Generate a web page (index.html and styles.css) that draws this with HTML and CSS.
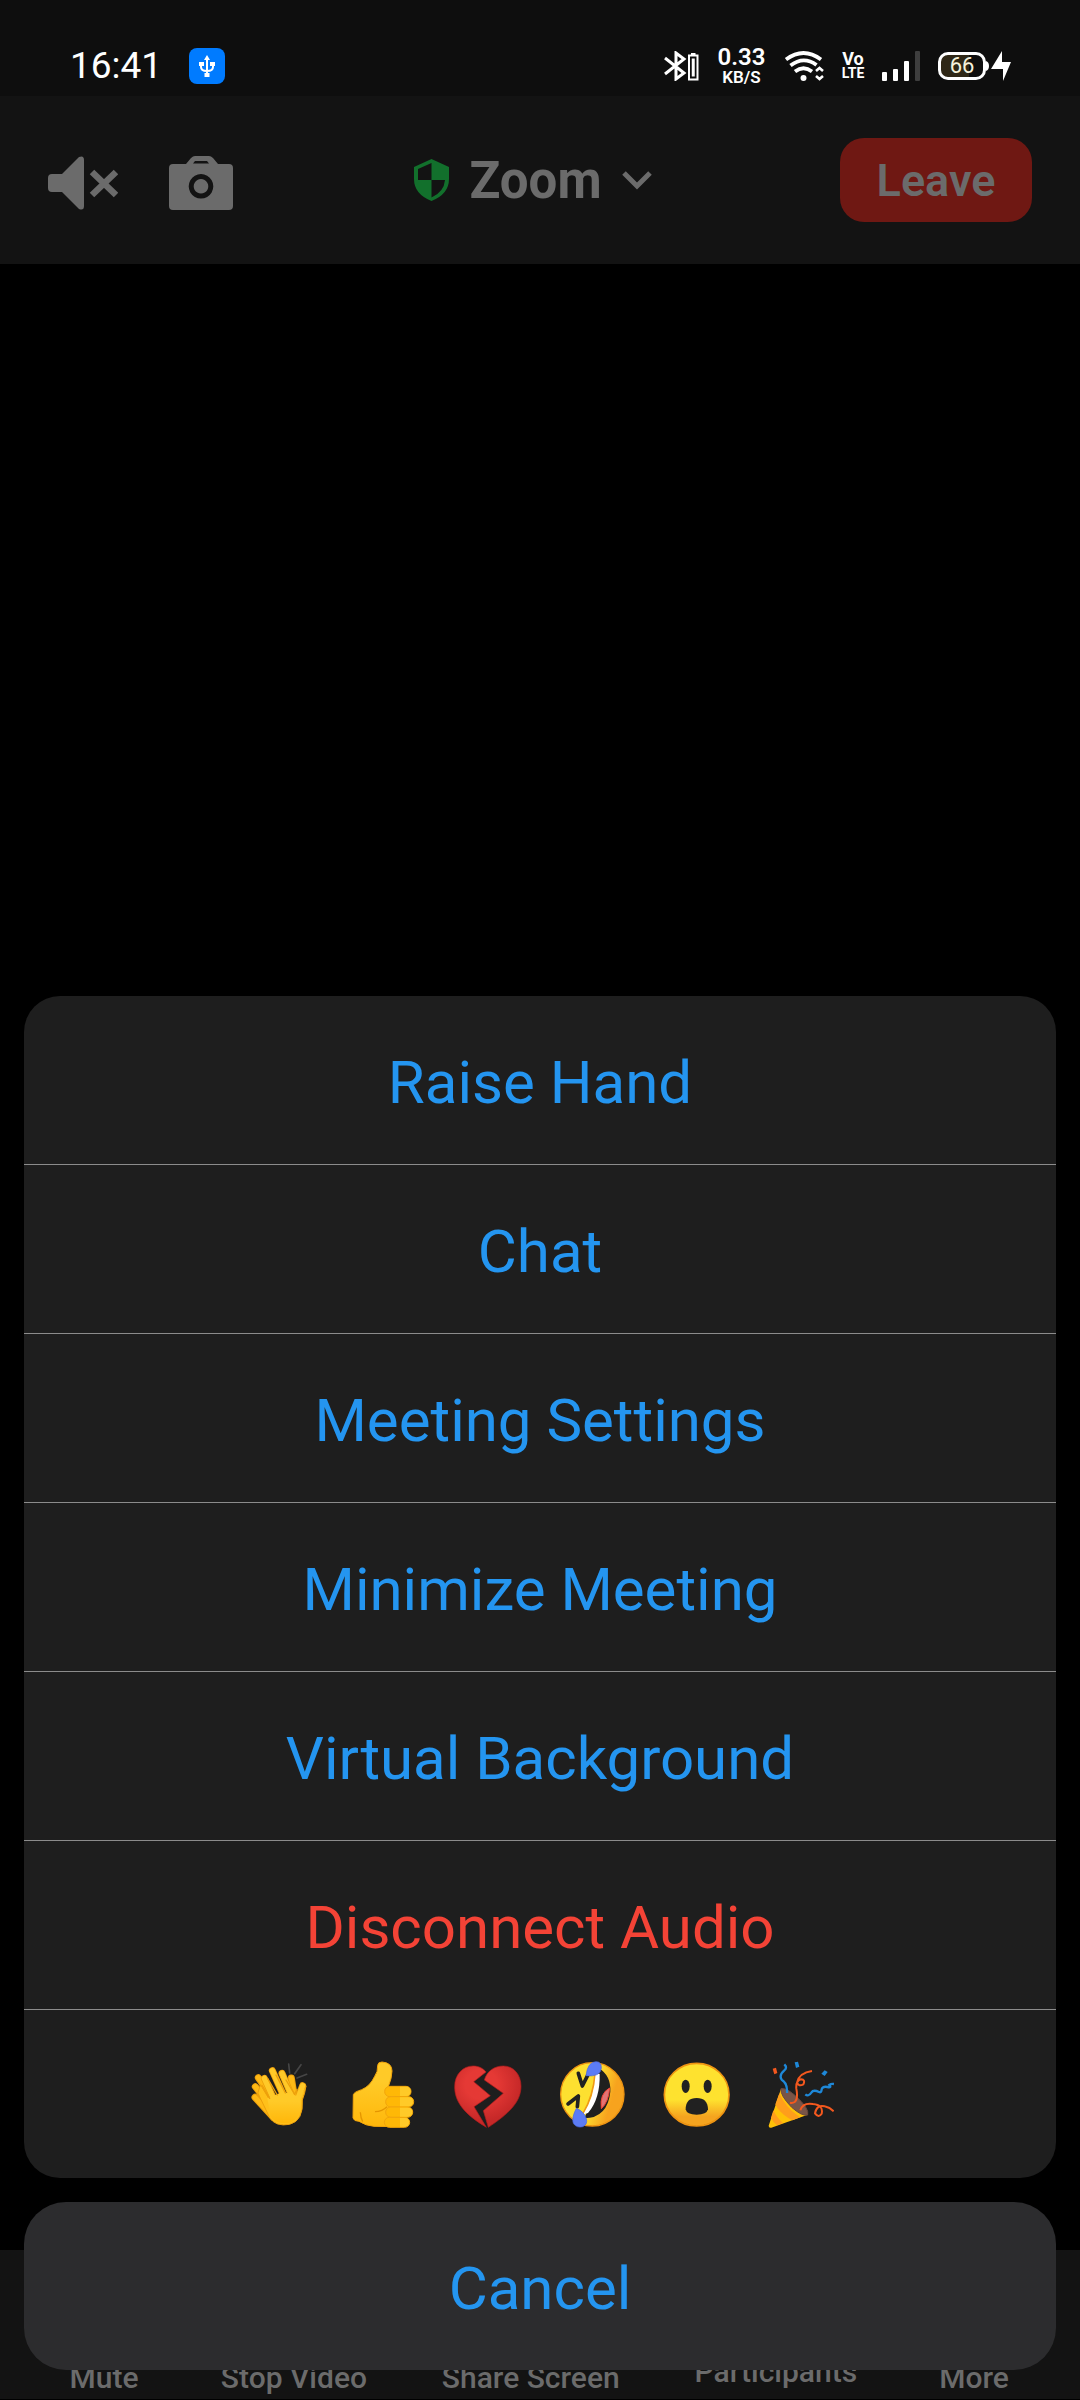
FILE: index.html
```html
<!DOCTYPE html>
<html lang="en">
<head>
<meta charset="utf-8">
<meta name="viewport" content="width=device-width, initial-scale=1">
<title>Zoom</title>
<link rel="stylesheet" href="styles.css">
</head>
<body>
<div class="screen">
  <div class="status">
    <div class="status-left">
      <span class="time">16:41</span>
      <svg class="usb" width="36" height="36" viewBox="0 0 36 36" aria-hidden="true">
        <rect width="36" height="36" rx="8" fill="#007bff"/>
        <path d="M18 12v16M12 17v2q0 4 6 4t6-4v-2" fill="none" stroke="#fff" stroke-width="2"/>
        <path d="M18 7l3 5h-6zM10 14h5v4h-5zM21 14h5v4h-5zM15.500 25h5v4h-5z" fill="#fff"/>
      </svg>
    </div>
    <div class="status-right">
      <svg width="35" height="30" viewBox="0 0 35 30" fill="none" stroke="#fff" aria-hidden="true">
        <path d="M1 7l19 15-8 6V2l8 6L1 23" stroke-width="3"/>
        <path d="M25 4.500h8.500v24H25zM27 3h4.500" stroke-width="2"/>
        <path d="M29.250 7.500v18" stroke-width="3"/>
      </svg>
      <div class="speed"><span class="speed-value">0.33</span><span class="speed-unit">KB/S</span></div>
      <svg width="40" height="30" viewBox="0 0 40 30" aria-hidden="true">
        <g fill="none" stroke="#fff" stroke-width="3.800">
          <path d="M2 8.500Q19.500-4.500 37 8.500"/>
          <path d="M6.500 14.500Q19.500 4.500 32.500 14"/>
          <path d="M11 20.500Q19.500 14 28 20.500"/>
          <path d="M32 20l3.500-3 3.500 3M32 25l3.500 3 3.500-3" stroke-width="2.600"/>
        </g>
        <circle cx="19.500" cy="27" r="3"/>
      </svg>
      <div class="volte"><span class="volte-vo">Vo</span><span class="volte-lte">LTE</span></div>
      <svg width="38" height="30" viewBox="0 0 38 30" aria-hidden="true">
        <rect y="21" width="5" height="9" rx="1"/><rect x="11" y="18" width="5" height="12" rx="1"/>
        <rect x="22" y="10" width="5" height="20" rx="1"/><rect x="33" width="5" height="30" rx="1" fill="#3e3e3e"/>
      </svg>
      <div class="power">
        <span class="battery">66</span>
        <svg width="25" height="30" viewBox="0 0 25 30" aria-hidden="true">
          <path d="M0 10q3 1 3 5t-3 5zM16 0v11h9L17 30V18H5z"/>
        </svg>
      </div>
    </div>
  </div>

  <header class="header">
    <div class="tools">
      <button class="icon-button" aria-label="Speaker">
        <svg width="70" height="54" viewBox="0 0 70 54">
          <path d="M4 18h10L31 1q5-2 5 3v46q0 5-5 3L14 36H4q-4 0-4-4V22q0-4 4-4z"/>
          <path d="M44 16l24 23M68 16L44 39" fill="none" stroke="#6b6b6b" stroke-width="6.500"/>
        </svg>
      </button>
      <button class="icon-button" aria-label="Switch camera">
        <svg width="64" height="54" viewBox="0 0 64 54">
          <path fill-rule="evenodd" d="M4 8h13l5-6q2-2 4-2h14q2 0 4 2l5 6h11q4 0 4 4v38q0 4-4 4H4q-4 0-4-4V12q0-4 4-4zM24 7.500h16L38 5H26zM32 18a12.300 12.300 0 1 0 .010 0zM32 23a7.300 7.300 0 1 1-.010 0z"/>
        </svg>
      </button>
    </div>
    <button class="title">
      <svg width="35" height="42" viewBox="0 0 35 42" aria-hidden="true">
        <path fill="#12702c" fill-rule="evenodd" d="M17.500 0L35 8v12q0 15-17.500 22Q0 35 0 20V8zM17.500 4L4 10v11h13.500zM17.500 21v17.500Q30 33 31 21z"/>
      </svg>
      <span>Zoom</span>
      <svg class="chevron" width="44" height="20" viewBox="0 0 44 20" aria-hidden="true">
        <path d="M2 3l13 13L28 3" fill="none" stroke="#6b6b6b" stroke-width="5"/>
      </svg>
    </button>
    <button class="leave">Leave</button>
  </header>

  <main class="stage"></main>

  <nav class="tabs">
    <span class="tab">Mute</span>
    <span class="tab">Stop Video</span>
    <span class="tab">Share Screen</span>
    <span class="tab tab-raised">Participants</span>
    <span class="tab">More</span>
  </nav>

  <div class="overlay" role="dialog" aria-label="More">
    <div class="sheet">
      <button class="action">Raise Hand</button>
      <button class="action">Chat</button>
      <button class="action">Meeting Settings</button>
      <button class="action">Minimize Meeting</button>
      <button class="action">Virtual Background</button>
      <button class="action danger">Disconnect Audio</button>
      <div class="reactions">
        <button class="reaction" aria-label="Clap">
          <svg width="68" height="68" viewBox="48 90 204 204" fill="none" stroke-linecap="round" stroke-linejoin="round">
            <defs>
              <linearGradient id="skin" x1="0" y1="0" x2="0" y2="1"><stop offset=".3" stop-color="#ffca28"/><stop offset="1" stop-color="#ffb70a"/></linearGradient>
            </defs>
            <path d="M176 102l3 27M213 104l-19 27M230 133l-29 11" stroke="#464646" stroke-width="5"/>
            <path d="M76 170l44 55M75 202l55 60M85 143l40 57M184 144l8 50" stroke="#eda00c" stroke-width="21"/>
            <path d="M76 170l44 55M75 202l55 60M85 143l40 57M184 144l8 50" stroke="#ffb915" stroke-width="15"/>
            <path d="M103 145l36 80M127 122l36 80M156 130l30 70M218 167l-13 35" stroke="#eda00c" stroke-width="21"/>
            <path d="M92 165l30 50 70-20 16 5 20-32q-3 22-11 42 4 62-38 73-42 8-60-20L84 190z" fill="#ffc01a" stroke="#eda00c" stroke-width="3"/>
            <path d="M103 145l36 80M127 122l36 80M156 130l30 70M218 167l-13 35" stroke="#ffc928" stroke-width="16"/>
            <path d="M112 205l47-20 32 10 20 5q8 65-31 78-38 8-58-18z" fill="url(#skin)"/>
            <path d="M96 166l23 39M113 145l29 50M138 135l28 54M168 150l26 43 7-15" stroke="#eda00c" stroke-width="4"/>
          </svg>
        </button>
        <button class="reaction" aria-label="Thumbs up">
          <svg width="68" height="68" viewBox="360 90 204 204" stroke="#f2a50b" stroke-width="3" stroke-linejoin="round">
            <path fill="url(#skin)" d="M443 106q1-10 13-10 30 2 30 27 0 20-12 50l20 5v112l-62-1q-25-2-45-15-15 0-18-10l1-70q2-8 25-15 25-10 39-40 10-13 9-33z"/>
            <rect x="464" y="169" width="79" height="31" rx="15" fill="#ffb806"/>
            <rect x="467" y="200" width="84" height="31" rx="15" fill="#ffb806"/>
            <rect x="467" y="231" width="81" height="31" rx="15" fill="#ffb806"/>
            <rect x="463" y="262" width="76" height="30" rx="15" fill="#ffb806"/>
            <path d="M510 170h18q14 0 14 14t-14 14h-18zM510 202h25q14 0 14 13t-14 14h-25zM510 233h23q14 0 14 13t-14 14h-23zM510 264h15q12 0 12 13t-12 13h-15z" fill="#ffca28" stroke="none"/>
            <path d="M435 245q22-1 36-15M391 247q1 17 7 28" fill="none" stroke="#e59600" stroke-width="4"/>
          </svg>
        </button>
        <button class="reaction" aria-label="Broken heart">
          <svg width="68" height="68" viewBox="672 90 204 204">
            <defs><radialGradient id="heart" cx=".4" cy=".3" r=".8"><stop offset=".3" stop-color="#e53935"/><stop offset=".75" stop-color="#c62828"/></radialGradient></defs>
            <path fill="url(#heart)" stroke="#b71c1c" stroke-width="2" d="M768 126l-37 29 50 42-49 33 37 62C700 250 674 214 674 170c0-37 25-62 55-62 18 0 32 8 39 18zM763 150c8-27 30-42 57-42 31 0 53 26 53 61 0 49-40 84-98 123l-15-50 60-52z"/>
          </svg>
        </button>
        <button class="reaction" aria-label="Rolling on the floor laughing">
          <svg width="68" height="68" viewBox="54 90 204 204">
            <defs><linearGradient id="rofl" x1="0" y1=".3" x2="1" y2=".6"><stop offset=".5" stop-color="#fde030"/><stop offset=".82" stop-color="#f7a31e"/></linearGradient></defs>
            <circle cx="157" cy="193" r="95" fill="url(#rofl)" stroke="#ee9412" stroke-width="4"/>
            <path d="M177 115q36 22 34 70-8 78-78 80 34-70 44-150z" fill="#20201f"/>
            <path d="M166 128q-5 70-37 124" fill="none" stroke="#f09a13" stroke-width="6"/>
            <path d="M167 133l12-2q2 75-35 118l-14 4q33-52 37-120z" fill="#fff"/>
            <path d="M209 174q-31 16-25 62 22-20 25-62z" fill="#e57373" stroke="#f44336" stroke-width="3"/>
            <path d="M115 130l12 38 16-32M84 222l31-24-3 32" fill="none" stroke="#212121" stroke-width="11" stroke-linecap="round" stroke-linejoin="round"/>
            <path d="M138 137q5-42 30-42 17 0 16 20-3 27-46 22zM109 235q-15 29-9 45 10 15 28 10 16-7 11-24-7-22-30-31z" fill="#5c7cf4" stroke="#4867db" stroke-width="2"/>
          </svg>
        </button>
        <button class="reaction" aria-label="Surprised">
          <svg width="68" height="68" viewBox="366 90 204 204">
            <defs><linearGradient id="wow" x1="0" y1="0" x2="0" y2="1"><stop offset=".58" stop-color="#fee22f"/><stop offset=".85" stop-color="#f5a41f"/></linearGradient></defs>
            <ellipse cx="470" cy="194" rx="97" ry="94" fill="url(#wow)" stroke="#ee9412" stroke-width="5"/>
            <g fill="#212121"><ellipse cx="437" cy="169" rx="12" ry="20"/><ellipse cx="503" cy="169" rx="12" ry="20"/><path d="M437 238q0-34 33-34t34 34q-4 16-34 16t-33-16z"/></g>
          </svg>
        </button>
        <button class="reaction" aria-label="Celebrate">
          <svg width="68" height="68" viewBox="678 90 204 204" fill="none">
            <path d="M723 176q28 62 80 78l-109 39q-8 2-8-6z" fill="#ffc107"/>
            <path d="M718 190q17 42 62 72l-22 9q-40-20-52-48zM700 241q10 22 29 38l-18 7q-12-10-18-23z" fill="#ff9e1b"/>
            <path d="M723 176q14-4 44 22 42 38 36 57-16 5-48-23-35-36-32-56z" fill="#795548" stroke="#6a493e" stroke-width="3"/>
            <path d="M733 103q10 10 0 18-17 14-8 28 18 11 16 40M796 193q9 8 18-5 6-10 23-2 7 3 8-8 2-10 17-7 14 3 6-6 6-5 14-3" stroke="#1e88d8" stroke-width="7"/>
            <path d="M816 123q-38 5-45 35 5 13 19 5 7-14-7-15-16 4-14 28 6 31-5 40-6 4-14 2M781 241q7-24 38-19 32 3 26 29-9 14-20-1 5-27 29-21 16 3 27 15" stroke="#f4581e" stroke-width="6"/>
            <path d="M764 97l10-2 4 15-10 4zM844 131l10-10 9 5-9 12z" fill="#1e88d8"/><path d="M698 116l10-3 4 16-9 4z" fill="#f4581e"/>
          </svg>
        </button>
      </div>
    </div>
    <button class="cancel">Cancel</button>
  </div>
</div>
</body>
</html>
```
FILE: styles.css
```css
* { box-sizing: border-box; }
body { margin: 0; background: #000; font-family: Roboto, "Liberation Sans", sans-serif; }
button { margin: 0; padding: 0; border: 0; background: none; font: inherit; color: inherit; cursor: pointer; }
svg { display: block; flex: none; }

.screen { display: flex; flex-direction: column; min-height: 100vh; }

.status { display: flex; align-items: center; justify-content: space-between; height: 96px; padding: 36px 69px 0 70px; background: #0e0e0e; color: #fff; fill: #fff; }
.status-left { display: flex; align-items: center; gap: 27px; }
.time { font-size: 37px; line-height: 40px; }
.status-right { display: flex; align-items: center; gap: 18px; }
.speed { display: flex; flex-direction: column; align-items: center; width: 49px; font-weight: 600; }
.speed-value { font-size: 24px; line-height: 22px; }
.speed-unit { font-size: 17px; line-height: 18px; }
.volte { display: flex; flex-direction: column; align-items: center; width: 22px; font-weight: 700; line-height: 15px; }
.volte-vo { font-size: 18px; }
.volte-lte { font-size: 14px; }
.power { display: flex; align-items: center; }
.battery { width: 48px; height: 28px; border: 3px solid #fff; border-radius: 10px; background: linear-gradient(90deg, #2f2716 66%, transparent 66%); color: #f6f2dc; font-size: 22px; line-height: 22px; text-align: center; }

.header { display: grid; grid-template-columns: 1fr auto 1fr; align-items: center; height: 168px; padding: 0 48px; background: #131313; color: #6b6b6b; fill: #6b6b6b; }
.tools { display: flex; gap: 51px; padding-top: 6px; }
.title { display: flex; align-items: center; gap: 20px; font-size: 51px; font-weight: 700; }
.leave { justify-self: end; width: 192px; height: 84px; border-radius: 24px; background: #6f1813; font-size: 45px; font-weight: 600; }

.stage { flex: 1; }

.tabs { display: flex; align-items: flex-end; justify-content: space-between; height: 150px; padding: 0 64px 4px 62px; border-bottom: 1px solid #000; background: #131313; color: #6b6b6b; font-size: 30px; font-weight: 500; line-height: 34px; }
.tab { min-width: 84px; text-align: center; }
.tab-raised { padding-bottom: 6px; }

.overlay { position: fixed; inset: auto 24px 30px; display: flex; flex-direction: column; gap: 24px; color: #2495f0; font-size: 60px; }
.sheet { display: flex; flex-direction: column; overflow: hidden; border-radius: 36px; background: #1e1e1e; }
.action { height: 169px; padding-top: 4px; border-bottom: 1px solid #8c8c8c; }
.danger { color: #f44336; }
.reactions { display: flex; justify-content: center; align-items: center; gap: 36px; height: 168px; }
.cancel { height: 168px; padding-top: 4px; border-radius: 42px; background: #2c2c2e; }
```
